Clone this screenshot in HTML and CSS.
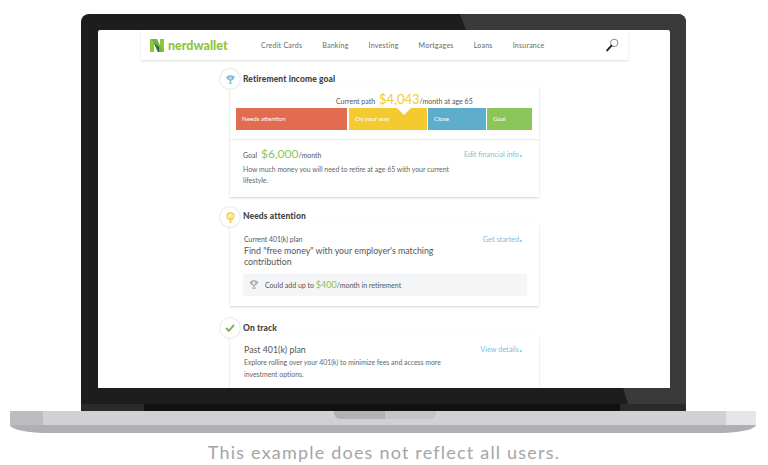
FILE: index.html
```html
<!DOCTYPE html>
<html>
<head>
    <meta charset="UTF-8">
    <title>NerdWallet retirement</title>
    <link rel="stylesheet" href="styles.css">
</head>
<body>
    <div class="lid">
        <div class="bezel">
            <div class="screen">
                <div class="nav">
                    <div class="logo">
                        <svg class="logo-mark" width="14" height="13" viewBox="0 0 14 13">
                            <rect x="0" y="0" width="4" height="13" fill="#8cc63f"/>
                            <rect x="10" y="0" width="4" height="13" fill="#8cc63f"/>
                            <polygon points="2,0 7,0 13,13 8,13" fill="#6fb13a"/>
                            <polygon points="4,4 9,8 9,13 8,13" fill="#2f6b3a"/>
                        </svg>
                        <span class="logo-text">nerdwallet</span>
                    </div>
                    <div class="nav-links">
                        <a>Credit Cards</a>
                        <a>Banking</a>
                        <a>Investing</a>
                        <a>Mortgages</a>
                        <a>Loans</a>
                        <a>Insurance</a>
                    </div>
                    <svg class="search" width="13" height="14" viewBox="0 0 13 14">
                        <circle cx="8.2" cy="4.9" r="3.7" fill="#fff" stroke="#8a8a8a" stroke-width="1"/>
                        <line x1="5.4" y1="7.7" x2="1.2" y2="12.4" stroke="#222" stroke-width="2" stroke-linecap="round"/>
                    </svg>
                </div>

                <div class="section first">
                    <div class="section-head">
                        <span class="badge">
                            <svg width="9" height="9" viewBox="0 0 10 10" fill="none" stroke="#5dabcd" stroke-width="1.1">
                                <path d="M3 1h4v3a2 2 0 0 1-4 0z" fill="#5dabcd" fill-opacity=".4"/>
                                <path d="M3 2H1c0 2 1 3 2 3M7 2h2c0 2-1 3-2 3M5 6v2M3 9h4"/>
                            </svg>
                        </span>
                        <h2>Retirement income goal</h2>
                    </div>
                    <div class="card">
                        <div class="path">
                            <div class="path-line">Current path <span class="amount-yellow">$4,043</span>/month at age 65</div>
                            <div class="bar">
                                <div class="seg seg-red">Needs attention</div>
                                <div class="seg seg-yellow">On your way</div>
                                <div class="seg seg-blue">Close</div>
                                <div class="seg seg-green">Goal</div>
                            </div>
                        </div>
                        <div class="goal">
                            <div class="row">
                                <div class="goal-line">Goal <span class="amount-green">$6,000</span>/month</div>
                                <a class="link">Edit financial info<span class="arrow"></span></a>
                            </div>
                            <p class="text">How much money you will need to retire at age 65 with your current lifestyle.</p>
                        </div>
                    </div>
                </div>

                <div class="section second">
                    <div class="section-head">
                        <span class="badge">
                            <svg width="9" height="11" viewBox="0 0 9 11" fill="none" stroke="#f3cb30" stroke-width="1.1">
                                <path d="M2.8 7.4C1.6 6.6 1 5.6 1 4.4a3.5 3.5 0 0 1 7 0c0 1.2-.6 2.2-1.8 3z" fill="#f3cb30" fill-opacity=".35"/>
                                <path d="M3 9h3M3.6 10.5h1.8M4.5 7V4.5"/>
                            </svg>
                        </span>
                        <h2>Needs attention</h2>
                    </div>
                    <div class="card card-pad">
                        <div class="row">
                            <div class="small">Current 401(k) plan</div>
                            <a class="link">Get started<span class="arrow"></span></a>
                        </div>
                        <div class="title">Find "free money" with your employer's matching contribution</div>
                        <div class="note">
                            <svg width="10" height="9" viewBox="0 0 10 10" fill="none" stroke="#8f8f8f" stroke-width="1">
                                <path d="M3 1h4v3a2 2 0 0 1-4 0z"/>
                                <path d="M3 2H1c0 2 1 3 2 3M7 2h2c0 2-1 3-2 3M5 6v2M3 9h4"/>
                            </svg>
                            <span>Could add up to <span class="amount-small">$400</span>/month in retirement</span>
                        </div>
                    </div>
                </div>

                <div class="section third">
                    <div class="section-head">
                        <span class="badge">
                            <svg width="10" height="8" viewBox="0 0 10 8" fill="none" stroke="#7dbb4c" stroke-width="2">
                                <path d="M1 4l2.8 2.8L9 1"/>
                            </svg>
                        </span>
                        <h2>On track</h2>
                    </div>
                    <div class="card card-pad card-last">
                        <div class="row">
                            <div class="title title-single">Past 401(k) plan</div>
                            <a class="link">View details<span class="arrow"></span></a>
                        </div>
                        <p class="text text-wide">Explore rolling over your 401(k) to minimize fees and access more investment options.</p>
                    </div>
                </div>
            </div>
        </div>
        <div class="hinge"></div>
    </div>
    <div class="base">
        <div class="base-top">
            <div class="base-left"></div>
            <div class="notch"></div>
            <div class="base-right"></div>
        </div>
        <div class="base-bottom"></div>
    </div>
    <div class="caption">This example does not reflect all users.</div>
</body>
</html>
```

FILE: styles.css
```css
body {
    margin: 0;
    width: 768px;
    height: 465px;
    overflow: hidden;
    background-color: #fff;
    font-family: Lato, Arial, sans-serif;
    color: #555;
}

h2, p {
    margin: 0;
}

/* laptop */
.lid {
    position: relative;
    width: 605px;
    margin: 14px 0 0 81px;
    border-radius: 8px 8px 0 0;
    overflow: hidden;
    background-color: #1d1d1d;
}

.lid::before {
    content: "";
    position: absolute;
    inset: 0;
    background-color: #3a3a3a;
    clip-path: polygon(379px 0, 605px 0, 605px 390px, 547px 390px, 542px 374px, 385px 16px);
}

.bezel {
    position: relative;
    padding: 16px 16px 16px 17px;
}

.screen {
    height: 358px;
    overflow: hidden;
    border-radius: 2px 2px 0 0;
    background-color: #fff;
}

.hinge {
    position: relative;
    height: 7px;
    background: linear-gradient(to right, #2a2a2a 63px, #111 63px, #111 539px, #2a2a2a 539px);
}

.base {
    width: 746px;
    margin-left: 10px;
}

.base-top {
    display: flex;
    justify-content: space-between;
    height: 14px;
    background-color: #d0d1d3;
}

.base-left {
    width: 33px;
    background-color: #bcbdc0;
}

.base-right {
    width: 30px;
    background-color: #e5e6ea;
}

.notch {
    width: 102px;
    height: 8px;
    border-radius: 0 0 6px 6px;
    background: linear-gradient(to right, #b2b2b4 50%, #c4c5c7 50%);
}

.base-bottom {
    height: 8px;
    border-radius: 0 0 40px 40px / 0 0 8px 8px;
    background-color: #b0b0b2;
}

.caption {
    margin-top: 8px;
    text-align: center;
    font-size: 18px;
    line-height: 22px;
    letter-spacing: 1.2px;
    color: #a5a5a5;
}

/* nav */
.nav {
    display: flex;
    align-items: center;
    width: 487px;
    height: 30px;
    margin-left: 43px;
    background-color: #fff;
    box-shadow: 0 1px 2px rgba(0, 0, 0, 0.15);
}

.logo {
    display: flex;
    align-items: center;
    gap: 4px;
    width: 120px;
    padding-left: 9px;
    box-sizing: border-box;
}

.logo-text {
    font-weight: 900;
    font-size: 12.5px;
    color: #8cc63f;
}

.nav-links {
    display: flex;
    gap: 20px;
    font-size: 7px;
    letter-spacing: 0.25px;
    color: #666;
}

.search {
    margin-left: auto;
    margin-right: 9px;
}

/* sections */
.section {
    width: 319px;
    margin-left: 122px;
}

.first {
    margin-top: 9px;
}

.second {
    margin-top: 10px;
}

.third {
    margin-top: 12px;
}

.section-head {
    display: flex;
    align-items: center;
    gap: 3px;
    height: 20px;
    margin-bottom: -3px;
}

.section-head h2 {
    font-size: 8.5px;
    font-weight: 900;
    letter-spacing: 0.1px;
    color: #444;
    margin-top: -1px;
}

.second .section-head h2 {
    margin-top: -3px;
}

.badge {
    position: relative;
    z-index: 1;
    display: flex;
    align-items: center;
    justify-content: center;
    width: 20px;
    height: 20px;
    border-radius: 50%;
    background-color: #fff;
    box-shadow: 0 0 2px rgba(0, 0, 0, 0.25);
}

.card {
    margin-left: 10px;
    background-color: #fff;
    box-shadow: 0 1px 2px rgba(0, 0, 0, 0.18);
}

.card-pad {
    box-sizing: border-box;
    height: 82px;
    padding: 10px 16px 0 14px;
}

.card-last {
    height: 60px;
    padding-top: 9px;
}

.row {
    display: flex;
    justify-content: space-between;
    align-items: center;
}

/* current path */
.path {
    height: 53px;
    padding: 0 7px 0 6px;
    box-shadow: 0 1px 1px rgba(0, 0, 0, 0.08);
}

.path-line {
    height: 22px;
    line-height: 26px;
    padding-left: 100px;
    font-size: 7px;
    white-space: nowrap;
}

.amount-yellow {
    margin-left: 2px;
    font-size: 13px;
    color: #f3cb30;
}

.bar {
    display: flex;
    gap: 1px;
    height: 22px;
}

.seg {
    box-sizing: border-box;
    padding-left: 6px;
    line-height: 22px;
    font-size: 6.2px;
    color: #fff;
}

.seg-red {
    width: 111px;
    margin-right: 1px;
    background-color: #e16c50;
}

.seg-yellow {
    position: relative;
    width: 78px;
    background-color: #f3cb30;
}

.seg-yellow::after {
    content: "";
    position: absolute;
    top: 0;
    left: 48px;
    border: 7px solid transparent;
    border-bottom: 0;
    border-top-color: #fff;
}

.seg-blue {
    width: 58px;
    background-color: #5fadcd;
}

.seg-green {
    width: 45px;
    background-color: #8cc65a;
}

/* goal */
.goal {
    box-sizing: border-box;
    height: 58px;
    padding: 6px 16px 0 13px;
}

.goal-line {
    font-size: 7px;
    line-height: 17px;
}

.amount-green {
    margin-left: 2px;
    font-size: 12px;
    color: #8cc65a;
}

.amount-small {
    font-size: 9px;
    color: #8cc65a;
}

.link {
    font-size: 7.3px;
    color: #7ec0da;
    white-space: nowrap;
}

.arrow {
    display: inline-block;
    margin-left: 1px;
    border-left: 3px solid #7ec0da;
    border-top: 1.5px solid transparent;
    border-bottom: 1.5px solid transparent;
}

.text {
    width: 215px;
    font-size: 6.9px;
    line-height: 11.3px;
    color: #666;
}

.text-wide {
    margin-top: 2px;
}

.small {
    font-size: 6.9px;
    line-height: 11px;
}

.title {
    width: 215px;
    font-size: 8.8px;
    line-height: 11.3px;
}

.title-single {
    margin-top: 0;
}

.note {
    display: flex;
    align-items: center;
    gap: 6px;
    width: 284px;
    height: 22px;
    margin: 6.4px 0 0 -1px;
    padding-left: 6px;
    box-sizing: border-box;
    background-color: #f4f5f7;
    font-size: 7px;
}
```
